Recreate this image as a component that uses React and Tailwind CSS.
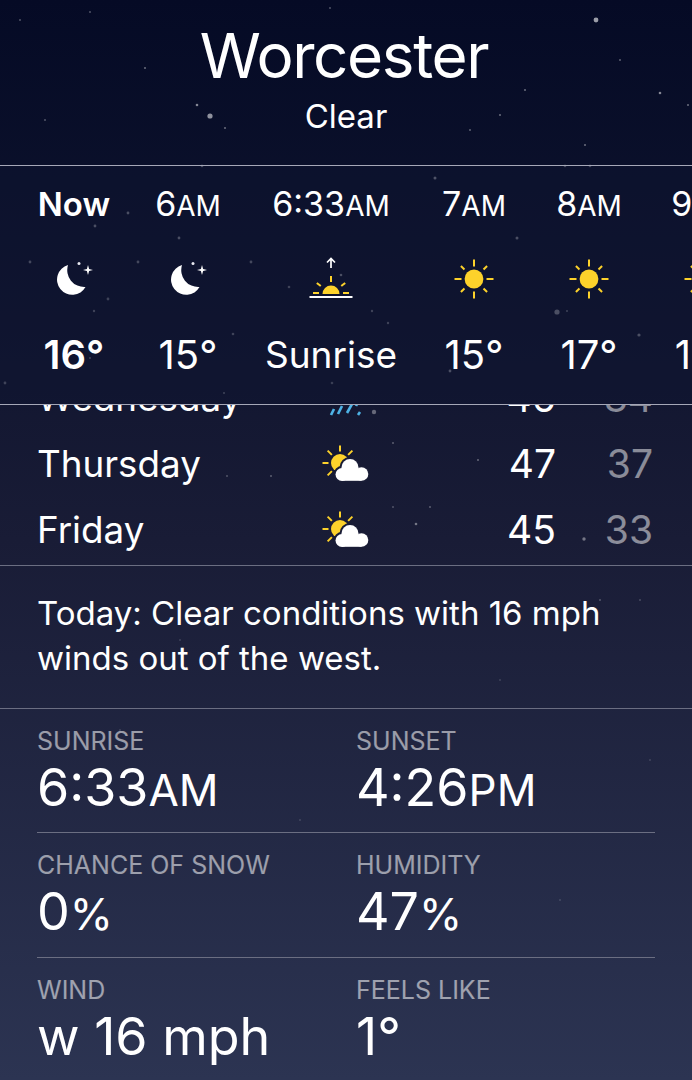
const stars = [
[596,20,2.4,.6],[210,116,2.6,.55],[660,93,1.3,.5],[145,68,1,.4],[197,105,1.3,.5],[500,115,1,.4],[688,105,1,.4],[20,20,1,.3],[525,90,1,.4],[470,130,1,.35],[620,60,1,.35],[90,12,1,.3],[330,8,1,.3],[225,128,1,.4],[585,145,1,.4],[45,120,1,.3],
[202,166,1.3,.5],[565,166,1.3,.45],[590,166,1.3,.45],[128,213,1.4,.5],[95,226,1.4,.5],[179,238,1.4,.5],[30,262,1.4,.45],[138,262,1.4,.45],[251,262,1.4,.45],[108,299,1.4,.4],[94,311,1.2,.4],[372,311,1.2,.4],[388,323,1.2,.4],[233,334,1.3,.4],[5,383,1.4,.4],[332,383,1.3,.35],[435,178,1.5,.55],[517,238,1.5,.5],[557,312,2.6,.5],[567,311,1,.4],[639,335,1.6,.5],[450,371,1.4,.5],[341,275,1.3,.5],[289,287,1.3,.4],[90,358,1,.4],[224,393,1,.4],
[374,412,2.2,.35],[478,460,1,.35],[416,524,1.3,.4],[584,539,1.7,.4],[430,507,1,.3],[271,476,1,.3],[393,443,1,.3],[227,476,1,.25],[393,507,1,.25],[600,600,1,.25],[640,600,1,.2],[180,640,1,.15],[500,680,1,.15],[120,730,1,.15],[650,760,1,.15],[300,820,1,.15],[560,900,1,.15],
];

const hours = [
  { t: "Now", v: "16°", icon: "moon", w: "w-[114px]", bold: true },
  { t: "6", s: "AM", v: "15°", icon: "moon", w: "w-[114px]" },
  { t: "6:33", s: "AM", v: "Sunrise", icon: "sunrise", w: "w-[172px]", word: true },
  { t: "7", s: "AM", v: "15°", icon: "sun", w: "w-[114px]" },
  { t: "8", s: "AM", v: "17°", icon: "sun", w: "w-[116px]" },
  { t: "9", s: "AM", v: "18°", icon: "sun", w: "w-[114px]" },
];

const Rays = ({ cx, cy, r1, r2, angles, w = 2 }) =>
  angles.map((a) => {
    const q = (a * Math.PI) / 180;
    return (
      <line key={a} x1={cx + r1 * Math.cos(q)} y1={cy + r1 * Math.sin(q)} x2={cx + r2 * Math.cos(q)} y2={cy + r2 * Math.sin(q)}
        stroke="#fdd22b" strokeWidth={w} />
    );
  });

function Moon() {
  return (
    <svg width="40" height="40" viewBox="0 0 40 40" className="block">
      <path d="M14 6 A15.2 15.2 0 1 0 31.5 28 A17 17 0 0 1 14 6 Z" fill="#fff" />
      <circle cx="25" cy="4.5" r="1.5" fill="#e8e8f0" />
      <path d="M34 6 L35.1 9.9 L39 11 L35.1 12.1 L34 16 L32.9 12.1 L29 11 L32.9 9.9 Z" fill="#fff" />
    </svg>
  );
}
function Sun() {
  return (
    <svg width="40" height="40" viewBox="0 0 40 40" className="block">
      <circle cx="20" cy="20" r="9.4" fill="#fdd22b" />
      <Rays cx={20} cy={20} r1={12.5} r2={19.5} angles={[0, 90, 180, 270]} w={2} />
      <Rays cx={20} cy={20} r1={13.5} r2={18.5} angles={[45, 135, 225, 315]} w={2} />
    </svg>
  );
}
function Sunrise() {
  return (
    <svg width="44" height="44" viewBox="0 0 44 44" className="block">
      <path d="M22 11 V1.5 M18 5.5 L22 1.5 L26 5.5" stroke="#fff" strokeWidth="1.7" fill="none" />
      <path d="M13.5 37 A8.5 8.5 0 0 1 30.5 37 Z" fill="#fdd22b" />
      <Rays cx={22} cy={37} r1={12} r2={18} angles={[270]} w={2} />
      <Rays cx={22} cy={37} r1={13} r2={18} angles={[218, 322]} w={2} />
      <line x1="4" y1="36" x2="10" y2="36" stroke="#fdd22b" strokeWidth="2" />
      <line x1="34" y1="36" x2="40" y2="36" stroke="#fdd22b" strokeWidth="2" />
      <rect x="0.5" y="39" width="43" height="2" fill="#fff" />
    </svg>
  );
}
function CloudShape(props) {
  return (
    <g {...props}>
      <circle cx="20" cy="29.5" r="6.5" />
      <circle cx="28" cy="22.5" r="8.5" />
      <circle cx="39.5" cy="29" r="6.8" />
      <rect x="20" y="24" width="19.5" height="11.8" />
    </g>
  );
}
function PartlyCloudy() {
  return (
    <svg width="47" height="38" viewBox="0 0 47 38" className="block">
      <circle cx="18" cy="18" r="9" fill="#fdd22b" />
      <Rays cx={18} cy={18} r1={11.5} r2={17.5} angles={[270, 180, 225, 315, 135]} w={2} />
      <CloudShape fill="#191c36" stroke="#191c36" strokeWidth="4" />
      <CloudShape fill="#fff" />
    </svg>
  );
}
function Rain() {
  return (
    <svg width="36" height="14" viewBox="0 0 36 14" className="block">
      <line x1="7" y1="6" x2="4" y2="12" stroke="#4eb3e6" strokeWidth="2.6" />
      <line x1="15" y1="3" x2="11" y2="11" stroke="#4eb3e6" strokeWidth="2.6" />
      <line x1="25" y1="1" x2="20" y2="10" stroke="#4eb3e6" strokeWidth="2.6" />
      <line x1="33" y1="9" x2="31" y2="12" stroke="#4eb3e6" strokeWidth="2.6" />
      <line x1="30" y1="1" x2="29" y2="3" stroke="#4eb3e6" strokeWidth="2.6" />
    </svg>
  );
}
const icons = { moon: Moon, sun: Sun, sunrise: Sunrise };

function Hour({ h }) {
  const I = icons[h.icon];
  return (
    <div className={`${h.w} shrink-0 flex flex-col items-center`}>
      <div className={`h-[40px] flex items-baseline justify-center leading-[40px] whitespace-nowrap ${h.bold ? "font-semibold text-[33px]" : "text-[34px]"}`}>
        {h.t}
        {h.s && <span className="text-[28px]">{h.s}</span>}
      </div>
      <div className="h-[44px] mt-[33px] flex items-center justify-center"><I /></div>
      <div className={`mt-[32px] h-[44px] leading-[44px] whitespace-nowrap ${h.word ? "text-[37px]" : "text-[40px]"} ${h.bold ? "font-semibold" : ""}`}>{h.v}</div>
    </div>
  );
}

function Day({ d, hi, lo, rain }) {
  return (
    <div className="h-[66px] shrink-0 flex items-center pl-[37px] pr-[39px]">
      <div className="w-[285px] text-[36.8px] whitespace-nowrap">{d}</div>
      <div className="w-[47px] flex">{rain ? <div className="ml-[5px] mt-[24px]"><Rain /></div> : <PartlyCloudy />}</div>
      <div className="flex-1 text-[39px] text-right">{hi}</div>
      <div className="text-[39px] w-[97px] text-right text-white/50">{lo}</div>
    </div>
  );
}

function Stat({ label, value, unit, first }) {
  return (
    <div className={first ? "w-[319px]" : "flex-1"}>
      <div className="text-[25px] leading-[30px] text-white/55 whitespace-nowrap">{label}</div>
      <div className="text-[52px] leading-[60px] mt-[2px] whitespace-nowrap">
        {value}
        {unit && <span className="text-[44px]">{unit}</span>}
      </div>
    </div>
  );
}

export default function App() {
  return (
    <div className="relative w-[692px] h-[1080px] overflow-hidden text-white bg-gradient-to-b from-[#050a25] via-[#191c36] to-[#2c3452] font-['Inter','Liberation_Sans',sans-serif]">
      <svg className="absolute inset-0 blur-[0.6px]" width="692" height="1080">
        {stars.map(([x, y, r, o], i) => <circle key={i} cx={x} cy={y} r={r} fill="#fff" opacity={o} />)}
      </svg>
      <div className="relative">
        <header className="h-[165px] flex flex-col items-center pt-[19px]">
          <div className="text-[62px] leading-[74px] tracking-[-1.4px] -ml-[4px]">Worcester</div>
          <div className="text-[33px] leading-[40px] mt-[3px]">Clear</div>
        </header>
        <section className="relative z-10 h-[240px] border-y border-[#a6a8b8] bg-[#0e132f]/50 pt-[18px] pl-[17px] flex overflow-hidden">
          {hours.map((h, i) => <Hour key={i} h={h} />)}
        </section>
        <section className="relative h-[161px] overflow-hidden flex flex-col justify-end -mt-px pb-[2px]">
          <Day d="Wednesday" hi="46" lo="34" rain />
          <Day d="Thursday" hi="47" lo="37" />
          <Day d="Friday" hi="45" lo="33" />
        </section>
        <section className="h-[144px] border-y border-[#6b6e82] pl-[37px] pt-[25px] text-[33px] leading-[45px]">
          Today: Clear conditions with 16 mph<br />winds out of the west.
        </section>
        <section className="pl-[37px] pr-[37px]">
          <div className="flex h-[124px] pt-[17px] border-b border-[#6b6e82]">
            <Stat first label="SUNRISE" value="6:33" unit="AM" />
            <Stat label="SUNSET" value="4:26" unit="PM" />
          </div>
          <div className="flex h-[125px] pt-[17px] border-b border-[#6b6e82]">
            <Stat first label="CHANCE OF SNOW" value="0" unit="%" />
            <Stat label="HUMIDITY" value="47" unit="%" />
          </div>
          <div className="flex pt-[17px]">
            <Stat first label="WIND" value="w 16 mph" />
            <Stat label="FEELS LIKE" value="1°" />
          </div>
        </section>
      </div>
    </div>
  );
}
